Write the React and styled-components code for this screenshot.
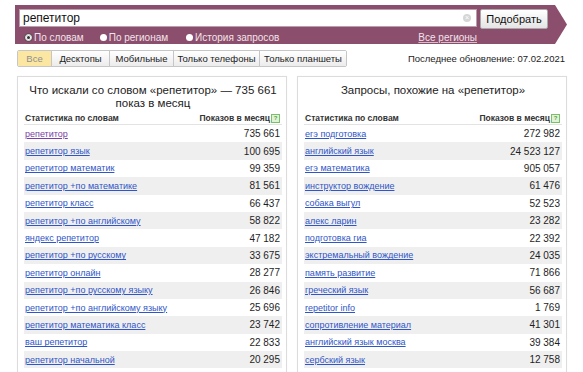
import React from 'react'
import styled, { createGlobalStyle } from 'styled-components'

const Global = createGlobalStyle`
  html, body {
    margin: 0;
    padding: 0;
    background: #fff;
    overflow: hidden;
    font-family: "Liberation Sans", Arial, sans-serif;
  }
`

const Page = styled.div`
  width: 583px;
  height: 372px;
  overflow: hidden;
  padding-top: 5px;
  box-sizing: border-box;
`

const Band = styled.div`
  margin-left: 15px;
  width: 552px;
  height: 39px;
  box-sizing: border-box;
  padding: 4px 0 0 4px;
  background: #8b4e6c;
  clip-path: polygon(0 0, calc(100% - 12px) 0, 100% 50%, calc(100% - 12px) 100%, 0 100%);
  display: grid;
  grid-template-columns: 458px 68px;
  column-gap: 3px;
  row-gap: 2px;
  align-items: start;
`

const SearchBox = styled.div`
  height: 18px;
  background: #fff;
  border: 1px solid #b7a0ab;
  box-sizing: border-box;
  display: flex;
  align-items: center;
  padding: 0 5px 0 3px;
  font-size: 12px;
  color: #111;
`

const SearchText = styled.span`
  flex: 1;
`

const Clear = styled.span`
  width: 8px;
  height: 8px;
  border-radius: 50%;
  background: #d6d6d6;
  color: #fff;
  font-size: 7px;
  line-height: 8px;
  text-align: center;
`

const Button = styled.button`
  height: 20px;
  padding: 0;
  border: 1px solid #a9a9a9;
  border-radius: 2px;
  background: linear-gradient(#ffffff, #e4e4e4);
  font-family: inherit;
  font-size: 11px;
  color: #111;
`

const Options = styled.div`
  display: flex;
  align-items: center;
  height: 12px;
  padding-left: 6px;
  font-size: 10px;
  color: #f3e3ea;
`

const Radio = styled.span`
  display: flex;
  align-items: center;
  gap: 2px;
  margin-right: ${p => p.gap}px;
  &::before {
    content: '';
    width: 7px;
    height: 7px;
    border-radius: 50%;
    background: ${p => (p.on ? '#333' : '#fff')};
    box-sizing: border-box;
    border: ${p => (p.on ? '1px solid #fff' : 'none')};
    box-shadow: ${p => (p.on ? 'inset 0 0 0 1px #fff, 0 0 0 0.5px #444' : 'none')};
  }
`

const Regions = styled.span`
  margin-left: auto;
  color: #f3e3ea;
  text-decoration: underline;
  text-decoration-color: #d9bfcc;
`

const TabRow = styled.div`
  display: flex;
  align-items: center;
  margin-top: 6px;
  padding: 0 18px 0 17px;
  height: 17px;
`

const Tabs = styled.div`
  display: flex;
  height: 17px;
  border: 1px solid #c6c6c6;
  border-radius: 2px;
  box-sizing: border-box;
  overflow: hidden;
`

const Tab = styled.span`
  width: ${p => p.w}px;
  display: flex;
  align-items: center;
  justify-content: center;
  font-size: 9.5px;
  color: ${p => (p.active ? '#8f8f8f' : '#222')};
  background: ${p => (p.active ? '#fbe6a2' : 'linear-gradient(#ffffff, #ececec)')};
  border-left: ${p => (p.first ? 'none' : '1px solid #c6c6c6')};
`

const Updated = styled.span`
  margin-left: auto;
  font-size: 9.5px;
  color: #222;
`

const Columns = styled.div`
  display: grid;
  grid-template-columns: 270px 270px;
  column-gap: 10px;
  margin: 9px 0 0 17px;
`

const Panel = styled.div`
  border: 1px solid #dcdcdc;
  box-shadow: 0 0 1px rgba(0, 0, 0, 0.05);
  padding: 7px 4px 20px 6px;
`

const Title = styled.div`
  min-height: 26px;
  text-align: center;
  font-size: 11.5px;
  line-height: 13px;
  color: #222;
  padding: 0 2px;
`

const Head = styled.div`
  display: flex;
  align-items: center;
  justify-content: space-between;
  height: 12px;
  margin-top: 2px;
  padding: 0 2px 0 1px;
  border-bottom: 1px solid #e3e3e3;
  font-size: 8.5px;
  font-weight: bold;
  color: #333;
`

const Help = styled.span`
  display: inline-block;
  width: 7px;
  height: 7px;
  margin-left: 1px;
  border: 1px solid #7bbf6a;
  background: #dff2d6;
  color: #5aa046;
  font-size: 6px;
  line-height: 7px;
  text-align: center;
  vertical-align: middle;
`

const Row = styled.div`
  display: flex;
  align-items: center;
  justify-content: space-between;
  height: 17.4px;
  padding: 0 2px 0 1px;
  background: ${p => (p.odd ? '#efefef' : '#fff')};
`

const Link = styled.span`
  font-size: 9px;
  color: ${p => (p.visited ? '#7b3fa6' : '#2f55c8')};
  text-decoration: underline;
`

const Count = styled.span`
  font-size: 10px;
  color: #1e1e1e;
`

const left = [
  ['репетитор', '735 661'],
  ['репетитор язык', '100 695'],
  ['репетитор математик', '99 359'],
  ['репетитор +по математике', '81 561'],
  ['репетитор класс', '66 437'],
  ['репетитор +по английскому', '58 822'],
  ['яндекс репетитор', '47 182'],
  ['репетитор +по русскому', '33 675'],
  ['репетитор онлайн', '28 277'],
  ['репетитор +по русскому языку', '26 846'],
  ['репетитор +по английскому языку', '25 696'],
  ['репетитор математика класс', '23 742'],
  ['ваш репетитор', '22 833'],
  ['репетитор начальной', '20 295'],
]

const right = [
  ['егэ подготовка', '272 982'],
  ['английский язык', '24 523 127'],
  ['егэ математика', '905 057'],
  ['инструктор вождение', '61 476'],
  ['собака выгул', '52 523'],
  ['алекс ларин', '23 282'],
  ['подготовка гиа', '22 392'],
  ['экстремальный вождение', '24 035'],
  ['память развитие', '71 866'],
  ['греческий язык', '56 687'],
  ['repetitor info', '1 769'],
  ['сопротивление материал', '41 301'],
  ['английский язык москва', '39 384'],
  ['сербский язык', '12 758'],
]

const tabs = [
  ['Все', 33],
  ['Десктопы', 57],
  ['Мобильные', 63],
  ['Только телефоны', 85],
  ['Только планшеты', 86],
]

const Table = ({ title, rows, visitedFirst }) => (
  <Panel>
    <Title>{title}</Title>
    <Head>
      <span>Статистика по словам</span>
      <span>
        Показов в месяц<Help>?</Help>
      </span>
    </Head>
    {rows.map(([word, n], i) => (
      <Row key={word} odd={i % 2 === 1}>
        <Link visited={visitedFirst && i === 0}>{word}</Link>
        <Count>{n}</Count>
      </Row>
    ))}
  </Panel>
)

const App = () => {
  return (
    <Page>
      <Global />
      <Band>
        <SearchBox>
          <SearchText>репетитор</SearchText>
          <Clear>×</Clear>
        </SearchBox>
        <Button>Подобрать</Button>
        <Options>
          <Radio on gap={16}>По словам</Radio>
          <Radio gap={18}>По регионам</Radio>
          <Radio gap={0}>История запросов</Radio>
          <Regions>Все регионы</Regions>
        </Options>
      </Band>
      <TabRow>
        <Tabs>
          {tabs.map(([t, w], i) => (
            <Tab key={t} w={w} active={i === 0} first={i === 0}>
              {t}
            </Tab>
          ))}
        </Tabs>
        <Updated>Последнее обновление: 07.02.2021</Updated>
      </TabRow>
      <Columns>
        <Table
          title="Что искали со словом «репетитор» — 735 661 показ в месяц"
          rows={left}
          visitedFirst
        />
        <Table title="Запросы, похожие на «репетитор»" rows={right} />
      </Columns>
    </Page>
  )
}

export default App
